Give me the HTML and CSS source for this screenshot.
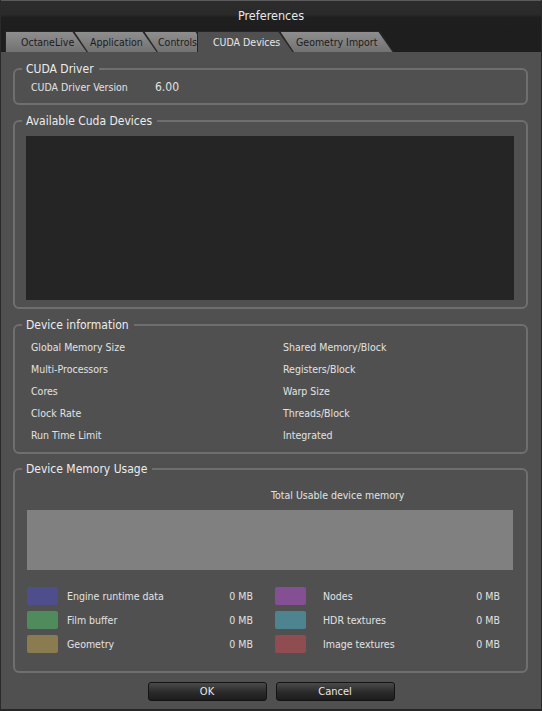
FILE: index.html
```html
<!DOCTYPE html>
<html lang="en">
<head>
    <meta charset="UTF-8">
    <meta name="viewport" content="width=device-width, initial-scale=1.0">
    <title>Preferences</title>
    <link rel="stylesheet" href="styles.css">
</head>
<body>
    <div class="window">
        <div class="titlebar">Preferences</div>

        <div class="tabbar">
            <div class="tab tab-octane">OctaneLive</div>
            <div class="tab tab-app">Application</div>
            <div class="tab tab-controls">Controls</div>
            <div class="tab tab-cuda active">CUDA Devices</div>
            <div class="tab tab-geometry">Geometry Import</div>
        </div>

        <div class="content">
            <fieldset class="group group-driver">
                <legend>CUDA Driver</legend>
                <div class="driver-row">
                    <span class="driver-label">CUDA Driver Version</span>
                    <span class="driver-version">6.00</span>
                </div>
            </fieldset>

            <fieldset class="group group-devices">
                <legend>Available Cuda Devices</legend>
                <div class="device-list"></div>
            </fieldset>

            <fieldset class="group group-info">
                <legend>Device information</legend>
                <div class="info-grid">
                    <span>Global Memory Size</span>
                    <span>Shared Memory/Block</span>
                    <span>Multi-Processors</span>
                    <span>Registers/Block</span>
                    <span>Cores</span>
                    <span>Warp Size</span>
                    <span>Clock Rate</span>
                    <span>Threads/Block</span>
                    <span>Run Time Limit</span>
                    <span>Integrated</span>
                </div>
            </fieldset>

            <fieldset class="group group-memory">
                <legend>Device Memory Usage</legend>
                <div class="memory-title">Total Usable device memory</div>
                <div class="memory-bar"></div>
                <div class="memory-legend">
                    <div class="mem-item"><span class="swatch engine"></span><span class="mem-name">Engine runtime data</span><span class="mem-value">0 MB</span></div>
                    <div class="mem-item"><span class="swatch nodes"></span><span class="mem-name">Nodes</span><span class="mem-value">0 MB</span></div>
                    <div class="mem-item"><span class="swatch film"></span><span class="mem-name">Film buffer</span><span class="mem-value">0 MB</span></div>
                    <div class="mem-item"><span class="swatch hdr"></span><span class="mem-name">HDR textures</span><span class="mem-value">0 MB</span></div>
                    <div class="mem-item"><span class="swatch geometry"></span><span class="mem-name">Geometry</span><span class="mem-value">0 MB</span></div>
                    <div class="mem-item"><span class="swatch image"></span><span class="mem-name">Image textures</span><span class="mem-value">0 MB</span></div>
                </div>
            </fieldset>
        </div>

        <div class="buttons">
            <button class="btn">OK</button>
            <button class="btn">Cancel</button>
        </div>
    </div>
</body>
</html>
```

FILE: styles.css
```css
* {
    box-sizing: border-box;
}

body {
    margin: 0;
    background-color: #1e1e1e;
    font-family: "DejaVu Sans Condensed", "Liberation Sans", Arial, sans-serif;
    color: #e2e2e2;
}

.window {
    width: 542px;
    height: 711px;
    background-color: #505050;
    border-left: 1px solid #2a2a2a;
    border-right: 1px solid #2a2a2a;
    border-bottom: 2px solid #262626;
}

.titlebar {
    height: 31px;
    line-height: 30px;
    text-align: center;
    font-size: 12.5px;
    color: #e8e8e8;
    border-top: 1px solid #5a5a5a;
    background: linear-gradient(#2c2c2c 0, #2a2a2a 45%, #1f1f1f 55%, #1e1e1e 100%);
}

/* tab strip, tabs overlap with a slanted right edge */
.tabbar {
    display: flex;
    height: 21px;
    padding-left: 4px;
    background-color: #1e1e1e;
}

.tab {
    position: relative;
    flex: none;
    height: 21px;
    line-height: 22px;
    padding-left: 16px;
    margin-right: -14px;
    font-size: 10.5px;
    color: #1c1c1c;
    white-space: nowrap;
    overflow: hidden;
    background-color: #262626;
    clip-path: polygon(0 0, calc(100% - 14px) 0, 100% 100%, 0 100%);
}

.tab::before {
    content: "";
    position: absolute;
    top: 1px;
    left: 1px;
    right: 0;
    bottom: 0;
    z-index: -1;
    background: linear-gradient(#8e8e8e, #727272);
    clip-path: polygon(0 0, calc(100% - 15.5px) 0, calc(100% - 1.5px) 100%, 0 100%);
}

.tab-octane { width: 83px; z-index: 5; }
.tab-app { width: 84px; z-index: 4; }
.tab-controls { width: 67px; padding-left: 14px; z-index: 3; }
.tab-geometry { width: 114px; z-index: 1; }

.tab.active {
    width: 97px;
    z-index: 10;
    color: #e6e6e6;
}

.tab.active::before {
    background: #505050;
}

.content {
    padding: 9px 13px 0 12px;
}

/* group boxes */
.group {
    margin: 0;
    padding: 0 12px 0 11px;
    min-width: 0;
    border: 2px solid #6f6f6f;
    border-radius: 6px;
}

.group legend {
    margin-left: -4px;
    padding: 0 5px 0 4px;
    font-size: 12px;
    line-height: 16px;
    color: #ececec;
}

.group-driver {
    padding-top: 2px;
    padding-bottom: 8px;
}

.driver-row {
    display: flex;
    align-items: center;
    height: 16px;
    padding-left: 5px;
    font-size: 10.5px;
}

.driver-label {
    width: 124px;
}

.driver-version {
    font-size: 12px;
}

.group-devices {
    margin-top: 8px;
    padding-top: 7px;
    padding-bottom: 7px;
}

.device-list {
    height: 164px;
    background-color: #252525;
}

.group-info {
    margin-top: 8px;
    padding-top: 3px;
    padding-bottom: 6px;
}

.info-grid {
    display: grid;
    grid-template-columns: 252px 1fr;
    grid-auto-rows: 22px;
    align-items: center;
    padding-left: 5px;
    font-size: 10.5px;
}

.group-memory {
    margin-top: 7px;
    padding-bottom: 15px;
}

.memory-title {
    margin-top: 10px;
    margin-left: 245px;
    line-height: 16px;
    font-size: 10.5px;
}

.memory-bar {
    height: 60px;
    margin: 7px 1px 0 1px;
    background-color: #808080;
}

.memory-legend {
    display: grid;
    grid-template-columns: 226px 225px;
    column-gap: 22px;
    grid-auto-rows: 24px;
    margin-top: 14px;
    padding-left: 1px;
    font-size: 10.5px;
}

.mem-item {
    display: flex;
    align-items: center;
}

.swatch {
    width: 31px;
    height: 18px;
    border-radius: 2px;
    margin-right: 9px;
}

.mem-item:nth-child(even) .swatch {
    margin-right: 17px;
}

.mem-name {
    flex: 1;
}

.swatch.engine { background-color: #4f4e8c; }
.swatch.film { background-color: #4f8b5d; }
.swatch.geometry { background-color: #8b7b51; }
.swatch.nodes { background-color: #854f93; }
.swatch.hdr { background-color: #4e8390; }
.swatch.image { background-color: #8f4c51; }

.buttons {
    display: flex;
    justify-content: center;
    gap: 9px;
    margin-top: 9px;
}

.btn {
    width: 119px;
    height: 19px;
    padding: 0;
    font-family: inherit;
    font-size: 11px;
    color: #e8e8e8;
    background: linear-gradient(#4a4a4a, #2a2a2a 55%, #1c1c1c);
    border: 1px solid #141414;
    border-radius: 3px;
    cursor: pointer;
}
```
